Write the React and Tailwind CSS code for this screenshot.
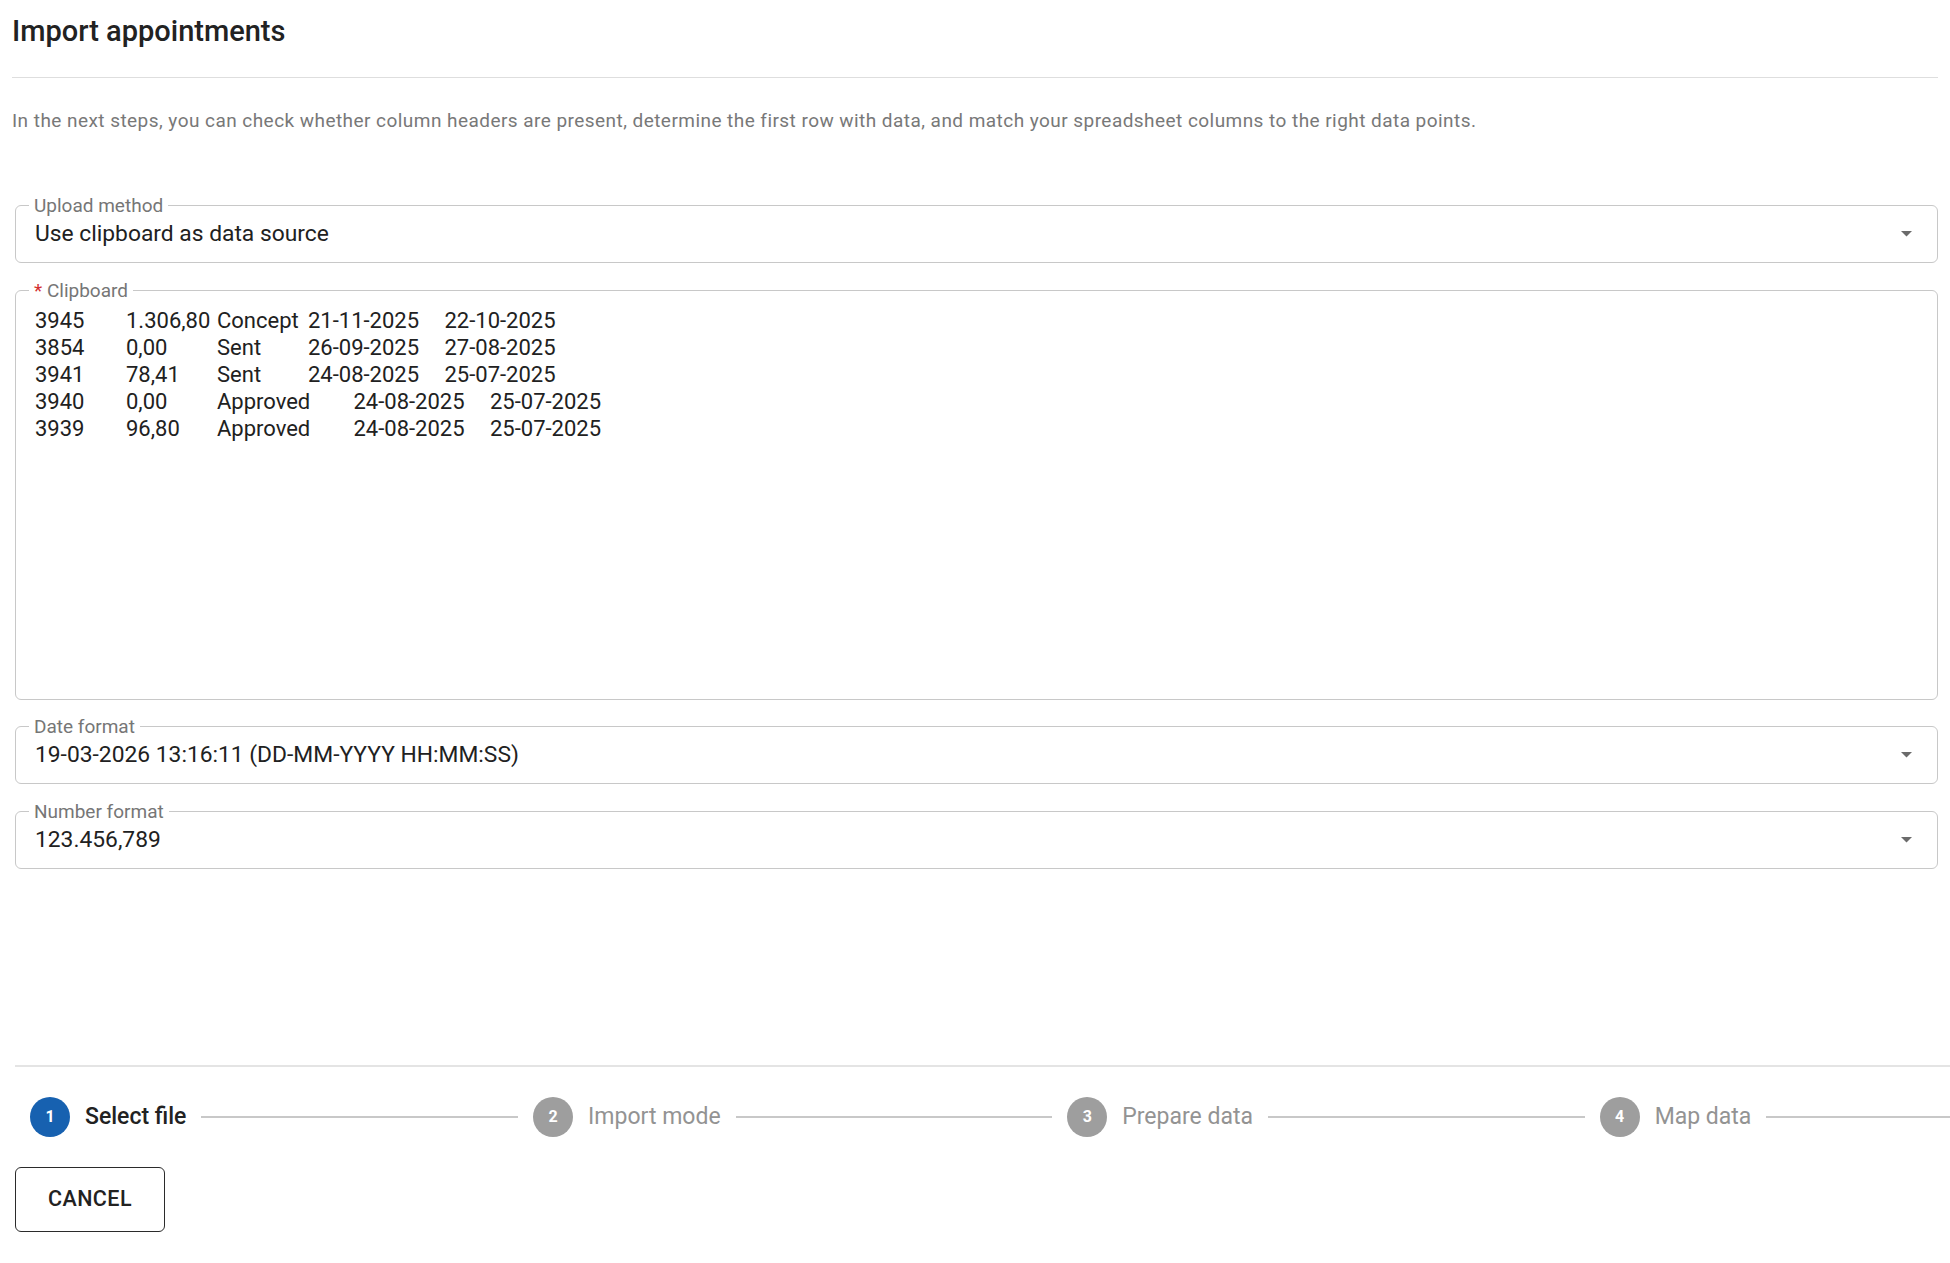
const rows = [
  [['3945', 91], ['1.306,80', 91], ['Concept', 91], ['21-11-2025', 136.5], ['22-10-2025']],
  [['3854', 91], ['0,00', 91], ['Sent', 91], ['26-09-2025', 136.5], ['27-08-2025']],
  [['3941', 91], ['78,41', 91], ['Sent', 91], ['24-08-2025', 136.5], ['25-07-2025']],
  [['3940', 91], ['0,00', 91], ['Approved', 136.5], ['24-08-2025', 136.5], ['25-07-2025']],
  [['3939', 91], ['96,80', 91], ['Approved', 136.5], ['24-08-2025', 136.5], ['25-07-2025']]
];

const steps = [
  { n: 1, label: 'Select file', active: true },
  { n: 2, label: 'Import mode' },
  { n: 3, label: 'Prepare data' },
  { n: 4, label: 'Map data' }
];

function FieldLabel({ label, required }) {
  return (
    <span className="absolute left-[13px] top-0 -translate-y-1/2 bg-white px-[5px] text-[19px] leading-[22px] text-[#767676]">
      {required && <span className="text-[#d32f2f]">* </span>}
      {label}
    </span>
  );
}

function SelectField({ label, value, className = '' }) {
  return (
    <div className={`relative ml-[3px] flex h-[58px] items-center rounded-[6px] border border-[#c8c8c8] pl-[19px] pr-[25px] ${className}`}>
      <FieldLabel label={label} />
      <span className="flex-1 text-[22.8px] leading-[28px] text-[#212121]">{value}</span>
      <svg width="11" height="6" viewBox="0 0 11 6">
        <polygon points="0,0 11,0 5.5,5.5" fill="#6b6b6b" />
      </svg>
    </div>
  );
}

export default function App() {
  return (
    <div className="min-h-screen w-full overflow-hidden bg-white font-['Roboto',sans-serif]">
      <div className="pl-[12px] pr-[12px] pt-[13px]">
        <h1 className="text-[29px] font-medium leading-[36px] text-[#222222]">Import appointments</h1>
        <div className="mt-[28px] h-px bg-[#dedede]" />
        <p className="mt-[29.5px] text-[19px] leading-[26px] tracking-[0.45px] text-[#787878]">
          In the next steps, you can check whether column headers are present, determine the first row with data, and match your spreadsheet columns to the right data points.
        </p>

        <SelectField label="Upload method" value="Use clipboard as data source" className="mt-[71.5px]" />

        <div className="relative ml-[3px] mt-[26.5px] h-[410px] rounded-[6px] border border-[#c8c8c8] pl-[19px] pt-[16.5px]">
          <FieldLabel label="Clipboard" required />
          <div className="text-[22px] leading-[27.1px] text-[#212121]">
            {rows.map((row, i) => (
              <div key={i} className="flex whitespace-pre">
                {row.map(([text, w], j) => (
                  <span key={j} className="shrink-0" style={w ? { width: w } : undefined}>{text}</span>
                ))}
              </div>
            ))}
          </div>
        </div>

        <SelectField label="Date format" value="19-03-2026 13:16:11 (DD-MM-YYYY HH:MM:SS)" className="mt-[26.5px]" />
        <SelectField label="Number format" value="123.456,789" className="mt-[26.5px]" />
      </div>

      <div className="mt-[196px] overflow-hidden pl-[15px]">
        <div className="h-[2px] bg-[#e4e4e4]" />
        <div className="mt-[30px] flex w-[2068px] items-center">
          {steps.map(s => (
            <div key={s.n} className="contents">
              <div className="flex items-center px-[15px]">
                <div className={`flex h-[40px] w-[40px] items-center justify-center rounded-full text-[16px] font-bold text-white ${s.active ? 'bg-[#1761b0]' : 'bg-[#9e9e9e]'}`}>
                  {s.n}
                </div>
                <span className={`ml-[15px] text-[23px] leading-[28px] ${s.active ? 'font-medium text-[#222222]' : 'text-[#939393]'}`}>
                  {s.label}
                </span>
              </div>
              <div className="h-[2px] flex-1 bg-[#c8c8c8]" />
            </div>
          ))}
        </div>
        <button className="mt-[30px] h-[65px] w-[150px] rounded-[6px] border-[1.5px] border-[#2b2b2b] text-[21.5px] font-medium tracking-[0.02em] text-[#222222]">
          CANCEL
        </button>
      </div>
    </div>
  );
}
